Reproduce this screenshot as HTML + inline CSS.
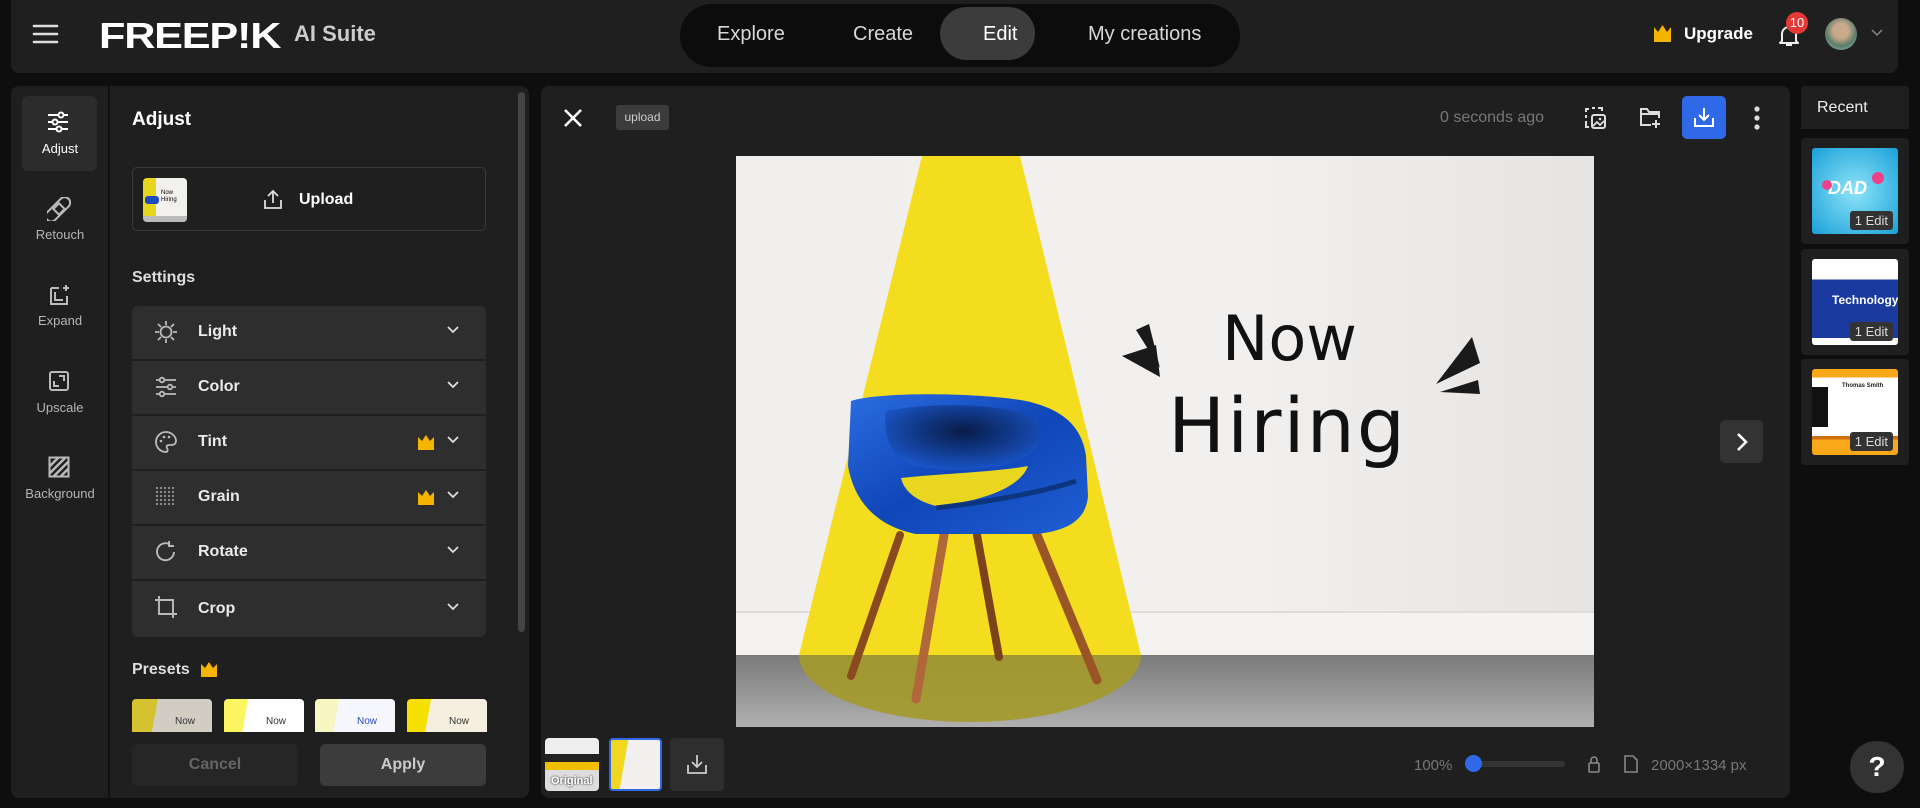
<!DOCTYPE html>
<html><head><meta charset="utf-8"><style>
*{box-sizing:border-box;margin:0;padding:0}
body{width:1920px;height:808px;background:#0e0e0e;font-family:"Liberation Sans",sans-serif;color:#fff;position:relative;overflow:hidden}
.a{position:absolute}
.panel{background:#1f1f1f;border-radius:8px}
.nav{font-size:20px;color:#d8d8d8}
.side-lbl{position:absolute;width:98px;left:11px;text-align:center;font-size:13px;color:#b5b5b5}
.item{position:absolute;left:132px;width:354px;height:53px;background:#2e2e2e}
.item .lbl{position:absolute;left:66px;top:17px;font-size:16px;font-weight:bold;color:#eaeaea}
.item svg.ic{position:absolute;left:22px;top:14px}
.item .chev{position:absolute;left:315px;top:20px}
.item .crown{position:absolute;left:286px;top:19px}
.rc{position:absolute;left:1801px;width:108px;height:106px;background:#1f1f1f;border-radius:4px}
.rc .t{position:absolute;left:11px;top:10px;width:86px;height:86px;border-radius:3px;overflow:hidden}
.rc .e{position:absolute;right:16px;bottom:14px;background:#333;color:#ddd;font-size:13px;padding:2px 5px;border-radius:3px}
</style></head><body>

<!-- top bar -->
<div class="a panel" style="left:11px;top:0;width:1887px;height:73px;border-radius:0 0 8px 8px"></div>
<svg class="a" style="left:32px;top:24px" width="27" height="20"><g stroke="#ddd" stroke-width="2.6" stroke-linecap="round"><line x1="2" y1="2" x2="25" y2="2"/><line x1="2" y1="10" x2="25" y2="10"/><line x1="2" y1="18" x2="25" y2="18"/></g></svg>
<div class="a" style="left:99px;top:15px;font-size:36px;font-weight:900;letter-spacing:-1px;transform:scale(1.2,1);transform-origin:left top">FREEP!K</div>
<div class="a" style="left:294px;top:21px;font-size:22px;font-weight:bold;color:#ccc">AI Suite</div>

<div class="a" style="left:680px;top:4px;width:560px;height:63px;background:#0c0c0c;border-radius:32px"></div>
<div class="a" style="left:940px;top:7px;width:95px;height:53px;background:#3c3c3c;border-radius:27px"></div>
<div class="a nav" style="left:717px;top:23px">Explore</div>
<div class="a nav" style="left:853px;top:23px">Create</div>
<div class="a nav" style="left:983px;top:23px;color:#fff">Edit</div>
<div class="a nav" style="left:1088px;top:23px">My creations</div>

<svg class="a" style="left:1653px;top:24px" width="19" height="19"><path d="M1 3 L5 8 L9.5 1 L14 8 L18 3 L18 18 L1 18Z" fill="#f5b400"/></svg>
<div class="a" style="left:1684px;top:24px;font-size:17px;font-weight:bold">Upgrade</div>
<svg class="a" style="left:1776px;top:22px" width="26" height="26"><path d="M6 19 V12 a7 7 0 0 1 14 0 V19 L22 21 H4Z M10 23 h6" fill="none" stroke="#eee" stroke-width="2" stroke-linejoin="round"/></svg>
<div class="a" style="left:1786px;top:12px;width:22px;height:22px;border-radius:11px;background:#e53935;font-size:13px;text-align:center;line-height:22px">10</div>
<div class="a" style="left:1825px;top:18px;width:32px;height:32px;border-radius:16px;background:radial-gradient(circle at 50% 40%,#c9a98c 0 30%,#5d7d6a 60%,#9bb 100%)"></div>
<svg class="a" style="left:1871px;top:29px" width="12" height="8"><path d="M1 1 L6 6 L11 1" fill="none" stroke="#888" stroke-width="1.5"/></svg>

<!-- left panel -->
<div class="a panel" style="left:11px;top:86px;width:518px;height:712px"></div>
<div class="a" style="left:108px;top:86px;width:2px;height:712px;background:#111"></div>
<div class="a" style="left:22px;top:96px;width:75px;height:75px;background:#2c2c2c;border-radius:6px"></div>
<svg class="a" style="left:47px;top:111px" width="22" height="22"><g stroke="#fff" stroke-width="2" fill="#2c2c2c"><line x1="1" y1="4" x2="21" y2="4"/><line x1="1" y1="11" x2="21" y2="11"/><line x1="1" y1="18" x2="21" y2="18"/><circle cx="14" cy="4" r="2.5"/><circle cx="8" cy="11" r="2.5"/><circle cx="12" cy="18" r="2.5"/></g></svg>
<div class="side-lbl" style="top:141px;color:#fff">Adjust</div>
<svg class="a" style="left:47px;top:197px" width="24" height="24"><g fill="none" stroke="#bbb" stroke-width="2"><rect x="-4" y="6" width="30" height="11" rx="5.5" transform="rotate(-45 12 12)"/><rect x="8" y="8" width="8" height="8" transform="rotate(-45 12 12)"/></g></svg>
<div class="side-lbl" style="top:227px">Retouch</div>
<svg class="a" style="left:48px;top:283px" width="24" height="24"><path d="M3 5 V21 H19 V13 M3 5 H11" fill="none" stroke="#bbb" stroke-width="2"/><path d="M7 9 V17 H15" fill="none" stroke="#bbb" stroke-width="2"/><path d="M18 2 v6 M15 5 h6" stroke="#bbb" stroke-width="2"/></svg>
<div class="side-lbl" style="top:313px">Expand</div>
<svg class="a" style="left:48px;top:370px" width="22" height="22"><rect x="2" y="2" width="18" height="18" rx="2" fill="none" stroke="#bbb" stroke-width="2"/><path d="M11 6 H16 V11 M6 11 V16 H11" fill="none" stroke="#bbb" stroke-width="2"/></svg>
<div class="side-lbl" style="top:400px">Upscale</div>
<svg class="a" style="left:48px;top:456px" width="22" height="22"><rect x="1.5" y="1.5" width="19" height="19" fill="none" stroke="#bbb" stroke-width="2"/><path d="M2 10 L10 2 M2 17 L17 2 M6 20 L20 6 M13 20 L20 13" stroke="#bbb" stroke-width="2.5"/></svg>
<div class="side-lbl" style="top:486px">Background</div>

<div class="a" style="left:132px;top:109px;font-size:19px;font-weight:bold">Adjust</div>
<div class="a" style="left:132px;top:167px;width:354px;height:64px;border:1px solid #3a3a3a;border-radius:5px"></div>
<div class="a" style="left:143px;top:178px;width:44px;height:44px;border-radius:4px;background:linear-gradient(90deg,#e8d520 0 30%,#f3f1ee 30%);overflow:hidden"><div style="position:absolute;left:2px;top:18px;width:14px;height:8px;background:#1c4dc0;border-radius:3px"></div><div style="position:absolute;left:0;bottom:0;width:44px;height:6px;background:#bbb"></div><div style="position:absolute;left:18px;top:12px;font-size:6px;color:#000;line-height:7px">Now<br>Hiring</div></div>
<svg class="a" style="left:263px;top:189px" width="20" height="21"><path d="M10 14 V2 M5 7 L10 2 L15 7 M2 11 V19 H18 V11" fill="none" stroke="#ddd" stroke-width="1.8"/></svg>
<div class="a" style="left:299px;top:191px;font-size:16px;font-weight:bold">Upload</div>
<div class="a" style="left:132px;top:269px;font-size:16px;font-weight:bold;color:#ddd">Settings</div>

<div class="a" style="left:132px;top:306px;width:354px;height:331px;background:#1f1f1f;border-radius:6px;overflow:hidden"></div>
<div class="item" style="top:306px;border-radius:6px 6px 0 0"><svg class="ic" width="24" height="24"><circle cx="12" cy="12" r="5.5" fill="none" stroke="#bbb" stroke-width="1.8"/><g stroke="#bbb" stroke-width="1.8"><path d="M12 1v4M12 19v4M1 12h4M19 12h4M4 4l3 3M17 17l3 3M4 20l3-3M17 7l3-3"/></g></svg><div class="lbl">Light</div><svg class="chev" width="12" height="8"><path d="M1 1 L6 6 L11 1" fill="none" stroke="#ddd" stroke-width="1.8"/></svg></div>
<div class="item" style="top:361px"><svg class="ic" width="24" height="24"><g stroke="#bbb" stroke-width="1.8" fill="#2e2e2e"><line x1="2" y1="5" x2="22" y2="5"/><line x1="2" y1="12" x2="22" y2="12"/><line x1="2" y1="19" x2="22" y2="19"/><circle cx="8" cy="5" r="2.3"/><circle cx="16" cy="12" r="2.3"/><circle cx="8" cy="19" r="2.3"/></g></svg><div class="lbl">Color</div><svg class="chev" width="12" height="8"><path d="M1 1 L6 6 L11 1" fill="none" stroke="#ddd" stroke-width="1.8"/></svg></div>
<div class="item" style="top:416px"><svg class="ic" width="24" height="24"><path d="M12 2 A10 10 0 1 0 12 22 C14 22 14 19 13 18 C12 16 13 15 15 15 H18 A4 4 0 0 0 22 11 C22 6 17 2 12 2Z" fill="none" stroke="#bbb" stroke-width="1.8"/><g fill="#bbb"><circle cx="7" cy="11" r="1.3"/><circle cx="10" cy="7" r="1.3"/><circle cx="15" cy="7" r="1.3"/></g></svg><div class="lbl">Tint</div><svg class="crown" width="16" height="15"><path d="M0 2 L4 6 L8 0 L12 6 L16 2 V15 H0Z" fill="#f5b400"/></svg><svg class="chev" width="12" height="8"><path d="M1 1 L6 6 L11 1" fill="none" stroke="#ddd" stroke-width="1.8"/></svg></div>
<div class="item" style="top:471px"><svg class="ic" width="24" height="24"><g fill="#aaa"><circle cx="3" cy="3" r="1"/><circle cx="7" cy="3" r="1"/><circle cx="11" cy="3" r="1"/><circle cx="15" cy="3" r="1"/><circle cx="19" cy="3" r="1"/><circle cx="3" cy="7" r="1"/><circle cx="7" cy="7" r="1"/><circle cx="11" cy="7" r="1"/><circle cx="15" cy="7" r="1"/><circle cx="19" cy="7" r="1"/><circle cx="3" cy="11" r="1"/><circle cx="7" cy="11" r="1"/><circle cx="11" cy="11" r="1"/><circle cx="15" cy="11" r="1"/><circle cx="19" cy="11" r="1"/><circle cx="3" cy="15" r="1"/><circle cx="7" cy="15" r="1"/><circle cx="11" cy="15" r="1"/><circle cx="15" cy="15" r="1"/><circle cx="19" cy="15" r="1"/><circle cx="3" cy="19" r="1"/><circle cx="7" cy="19" r="1"/><circle cx="11" cy="19" r="1"/><circle cx="15" cy="19" r="1"/><circle cx="19" cy="19" r="1"/></g></svg><div class="lbl">Grain</div><svg class="crown" width="16" height="15"><path d="M0 2 L4 6 L8 0 L12 6 L16 2 V15 H0Z" fill="#f5b400"/></svg><svg class="chev" width="12" height="8"><path d="M1 1 L6 6 L11 1" fill="none" stroke="#ddd" stroke-width="1.8"/></svg></div>
<div class="item" style="top:526px"><svg class="ic" width="24" height="24"><path d="M20 12 A8.5 8.5 0 1 1 16 4.5" fill="none" stroke="#bbb" stroke-width="1.9"/><path d="M15 1 V6 H20" fill="none" stroke="#bbb" stroke-width="1.9"/></svg><div class="lbl">Rotate</div><svg class="chev" width="12" height="8"><path d="M1 1 L6 6 L11 1" fill="none" stroke="#ddd" stroke-width="1.8"/></svg></div>
<div class="item" style="top:581px;height:56px;border-radius:0 0 6px 6px"><svg class="ic" width="24" height="24"><path d="M5 1 V19 H23 M1 5 H19 V23" fill="none" stroke="#bbb" stroke-width="1.9"/></svg><div class="lbl" style="top:19px">Crop</div><svg class="chev" width="12" height="8" style="top:22px"><path d="M1 1 L6 6 L11 1" fill="none" stroke="#ddd" stroke-width="1.8"/></svg></div>

<div class="a" style="left:518px;top:92px;width:7px;height:540px;background:#444;border-radius:4px"></div>

<div class="a" style="left:132px;top:661px;font-size:16px;font-weight:bold;color:#ddd">Presets</div>
<svg class="a" style="left:201px;top:662px" width="16" height="15"><path d="M0 2 L4 6 L8 0 L12 6 L16 2 V15 H0Z" fill="#f5b400"/></svg>
<div class="a" style="left:132px;top:699px;width:80px;height:33px;background:linear-gradient(100deg,#d4c230 0 30%,#d2cdc3 30%);border-radius:4px 4px 0 0"></div>
<div class="a" style="left:224px;top:699px;width:80px;height:33px;background:linear-gradient(100deg,#fbf560 0 28%,#fff 28%);border-radius:4px 4px 0 0"></div>
<div class="a" style="left:315px;top:699px;width:80px;height:33px;background:linear-gradient(100deg,#f8f6c0 0 28%,#f5f7fc 28%);border-radius:4px 4px 0 0"></div>
<div class="a" style="left:407px;top:699px;width:80px;height:33px;background:linear-gradient(100deg,#f5e000 0 28%,#f6efe0 28%);border-radius:4px 4px 0 0"></div>
<div class="a" style="left:175px;top:716px;font-size:10px;color:#333">Now</div>
<div class="a" style="left:266px;top:716px;font-size:10px;color:#333">Now</div>
<div class="a" style="left:357px;top:716px;font-size:10px;color:#2a4ac0">Now</div>
<div class="a" style="left:449px;top:716px;font-size:10px;color:#333">Now</div>
<div class="a" style="left:132px;top:744px;width:166px;height:42px;background:#262626;border-radius:5px;text-align:center;line-height:42px;font-size:16px;font-weight:bold;color:#666">Cancel</div>
<div class="a" style="left:320px;top:744px;width:166px;height:42px;background:#3c3c3c;border-radius:5px;text-align:center;line-height:42px;font-size:16px;font-weight:bold;color:#ccc">Apply</div>

<!-- main -->
<div class="a panel" style="left:541px;top:86px;width:1249px;height:712px"></div>
<svg class="a" style="left:563px;top:108px" width="20" height="20"><path d="M2 2 L18 18 M18 2 L2 18" stroke="#fff" stroke-width="2.6"/></svg>
<div class="a" style="left:616px;top:105px;width:53px;height:25px;background:#3c3c3c;border-radius:3px;font-size:12px;color:#ccc;text-align:center;line-height:25px">upload</div>
<div class="a" style="left:1440px;top:109px;font-size:16px;color:#777">0 seconds ago</div>
<svg class="a" style="left:1584px;top:106px" width="24" height="24"><path d="M2 6 V3 H5 M8 2 H11 M14 2 H18 V5 M2 9 V12 M2 15 V21 H5" fill="none" stroke="#ddd" stroke-width="2"/><rect x="8" y="9" width="13" height="13" rx="2" fill="none" stroke="#ddd" stroke-width="2"/><path d="M9 20 L13 16 L16 19 L20 15" fill="none" stroke="#ddd" stroke-width="1.8"/><circle cx="16" cy="13" r="1.3" fill="#ddd"/></svg>
<svg class="a" style="left:1638px;top:105px" width="24" height="24"><path d="M13 20 H3 V4 H9 L11 7 H21 V13 M3 9 H21" fill="none" stroke="#ddd" stroke-width="2"/><path d="M18 15 V23 M14 19 H22" stroke="#ddd" stroke-width="2"/></svg>
<div class="a" style="left:1682px;top:96px;width:44px;height:43px;background:#3069e8;border-radius:5px"></div>
<svg class="a" style="left:1692px;top:105px" width="24" height="24"><path d="M12 3 V15 M7 10 L12 15 L17 10 M3 13 V21 H21 V13" fill="none" stroke="#fff" stroke-width="2"/></svg>
<svg class="a" style="left:1753px;top:105px" width="8" height="26"><g fill="#ddd"><circle cx="4" cy="4" r="2.6"/><circle cx="4" cy="13" r="2.6"/><circle cx="4" cy="22" r="2.6"/></g></svg>

<!-- image -->
<svg class="a" style="left:736px;top:156px" width="858" height="571" viewBox="0 0 858 571">
<defs><linearGradient id="w" x1="0" y1="0" x2="1" y2="0"><stop offset="0" stop-color="#f1efed"/><stop offset="0.6" stop-color="#f2f0ee"/><stop offset="1" stop-color="#e6e4e2"/></linearGradient>
<linearGradient id="f" x1="0" y1="0" x2="0" y2="1"><stop offset="0" stop-color="#7a7a7a"/><stop offset="1" stop-color="#b0b0b0"/></linearGradient>
<linearGradient id="ch" x1="0" y1="0" x2="1" y2="1"><stop offset="0" stop-color="#2a6de0"/><stop offset="0.5" stop-color="#1046b8"/><stop offset="1" stop-color="#1e5fd4"/></linearGradient>
<radialGradient id="bk" cx="0.5" cy="0.4" r="0.6"><stop offset="0" stop-color="#06163a"/><stop offset="1" stop-color="#1a55c8"/></radialGradient></defs>
<rect width="858" height="571" fill="url(#w)"/>
<rect y="455" width="858" height="44" fill="#f4f3f1"/>
<line x1="0" y1="456" x2="858" y2="456" stroke="#d8d6d3" stroke-width="1.5"/>
<rect y="499" width="858" height="72" fill="url(#f)"/>
<path d="M186 0 H284 L405 499 H63Z" fill="#f4dd1e"/>
<path d="M63 499 H405 A171 67 0 0 1 63 499Z" fill="#a59a2a" opacity="0.9"/>
<g stroke-linecap="round">
<path d="M164 379 L115 520" stroke="#8a4a20" stroke-width="8"/>
<path d="M208 379 L180 543" stroke="#b0683a" stroke-width="9"/>
<path d="M241 379 L263 501" stroke="#7c421c" stroke-width="8"/>
<path d="M301 379 L361 524" stroke="#9a5526" stroke-width="9"/>
</g>
<path d="M115 245 C140 236 240 236 290 245 C320 252 345 265 350 300 L352 340 C350 365 330 375 300 378 L180 378 C140 370 118 345 112 310 Z" fill="url(#ch)"/>
<path d="M150 255 C200 245 270 248 300 262 C312 290 300 305 250 312 C200 318 170 310 160 300 C150 285 148 268 150 255Z" fill="url(#bk)" opacity="0.9"/>
<path d="M165 322 C200 318 260 316 292 310 C285 330 250 345 200 350 C180 345 168 335 165 322Z" fill="#e9d61f"/>
<path d="M200 352 C250 346 300 338 340 325" fill="none" stroke="#0d347f" stroke-width="5"/>
<g fill="#1a1a1a"><path d="M386 200 L420 189 L424 221Z"/><path d="M400 174 L413 168 L424 212Z"/><path d="M700 228 L736 181 L744 207Z"/><path d="M704 236 L742 224 L744 238Z"/></g>
<text x="486" y="204" font-family="DejaVu Sans,sans-serif" font-size="62" fill="#111">Now</text>
<text x="432" y="296" font-family="DejaVu Sans,sans-serif" font-size="76" fill="#111" letter-spacing="2">Hiring</text>
</svg>

<div class="a" style="left:1720px;top:420px;width:43px;height:43px;background:#333;border-radius:5px"></div>
<svg class="a" style="left:1733px;top:432px" width="18" height="20"><path d="M5 2 L13 10 L5 18" fill="none" stroke="#fff" stroke-width="2.6"/></svg>

<!-- bottom bar -->
<div class="a" style="left:545px;top:738px;width:54px;height:53px;border-radius:4px;background:linear-gradient(180deg,#eee 0 30%,#222 30% 45%,#f0c000 45% 60%,#ddd 60%);overflow:hidden"><div style="position:absolute;bottom:4px;left:6px;font-size:11px;font-weight:bold;color:#fff;text-shadow:0 0 2px #000">Original</div></div>
<div class="a" style="left:609px;top:738px;width:53px;height:53px;border:2px solid #3069e8;border-radius:4px;background:linear-gradient(100deg,#f0d820 0 30%,#f2f0ee 30%)"></div>
<div class="a" style="left:670px;top:738px;width:54px;height:53px;background:#2e2e2e;border-radius:4px"></div>
<svg class="a" style="left:686px;top:753px" width="22" height="22"><path d="M11 2 V14 M6 9 L11 14 L16 9 M2 12 V20 H20 V12" fill="none" stroke="#ccc" stroke-width="1.8"/></svg>
<div class="a" style="left:1414px;top:757px;font-size:15px;color:#777">100%</div>
<div class="a" style="left:1473px;top:761px;width:92px;height:6px;background:#333;border-radius:3px"></div>
<div class="a" style="left:1465px;top:755px;width:17px;height:17px;background:#3069e8;border-radius:9px"></div>
<svg class="a" style="left:1587px;top:755px" width="14" height="18"><rect x="2" y="8" width="10" height="9" rx="1" fill="none" stroke="#888" stroke-width="1.6"/><path d="M4 8 V5 a3 3 0 0 1 6 0 V8" fill="none" stroke="#888" stroke-width="1.6"/></svg>
<svg class="a" style="left:1624px;top:755px" width="14" height="18"><path d="M1 1 H9 L13 5 V17 H1Z" fill="none" stroke="#888" stroke-width="1.6"/></svg>
<div class="a" style="left:1651px;top:757px;font-size:15px;color:#777">2000×1334 px</div>

<!-- right -->
<div class="a" style="left:1801px;top:86px;width:108px;height:43px;background:#1f1f1f;border-radius:4px 4px 0 0"></div>
<div class="a" style="left:1817px;top:99px;font-size:16px;color:#eee">Recent</div>
<div class="rc" style="top:138px"><div class="t" style="background:radial-gradient(circle,#8ee4f8,#1aa0d8)"><div style="position:absolute;left:16px;top:30px;font-size:18px;font-weight:900;color:#fff;font-style:italic">DAD</div><div style="position:absolute;left:10px;top:32px;width:10px;height:10px;border-radius:5px;background:#f0408a"></div><div style="position:absolute;left:60px;top:24px;width:12px;height:12px;border-radius:6px;background:#f0408a"></div></div><div class="e">1 Edit</div></div>
<div class="rc" style="top:249px"><div class="t" style="background:linear-gradient(180deg,#fff 0 24%,#1b3aa0 24% 92%,#fff 92%)"><div style="position:absolute;left:20px;top:34px;font-size:12px;font-weight:bold;color:#fff">Technology</div></div><div class="e">1 Edit</div></div>
<div class="rc" style="top:359px"><div class="t" style="background:linear-gradient(180deg,#f8a818 0 10%,#fff 10% 78%,#d07010 78% 82%,#f8a818 82%)"><div style="position:absolute;left:0;top:18px;width:16px;height:40px;background:#111"></div><div style="position:absolute;left:30px;top:14px;font-size:6px;color:#222;font-weight:bold">Thomas Smith</div></div><div class="e">1 Edit</div></div>

<div class="a" style="left:1850px;top:741px;width:54px;height:52px;border-radius:27px;background:#333;text-align:center;line-height:52px;font-size:28px;font-weight:bold;color:#fff">?</div>
</body></html>
